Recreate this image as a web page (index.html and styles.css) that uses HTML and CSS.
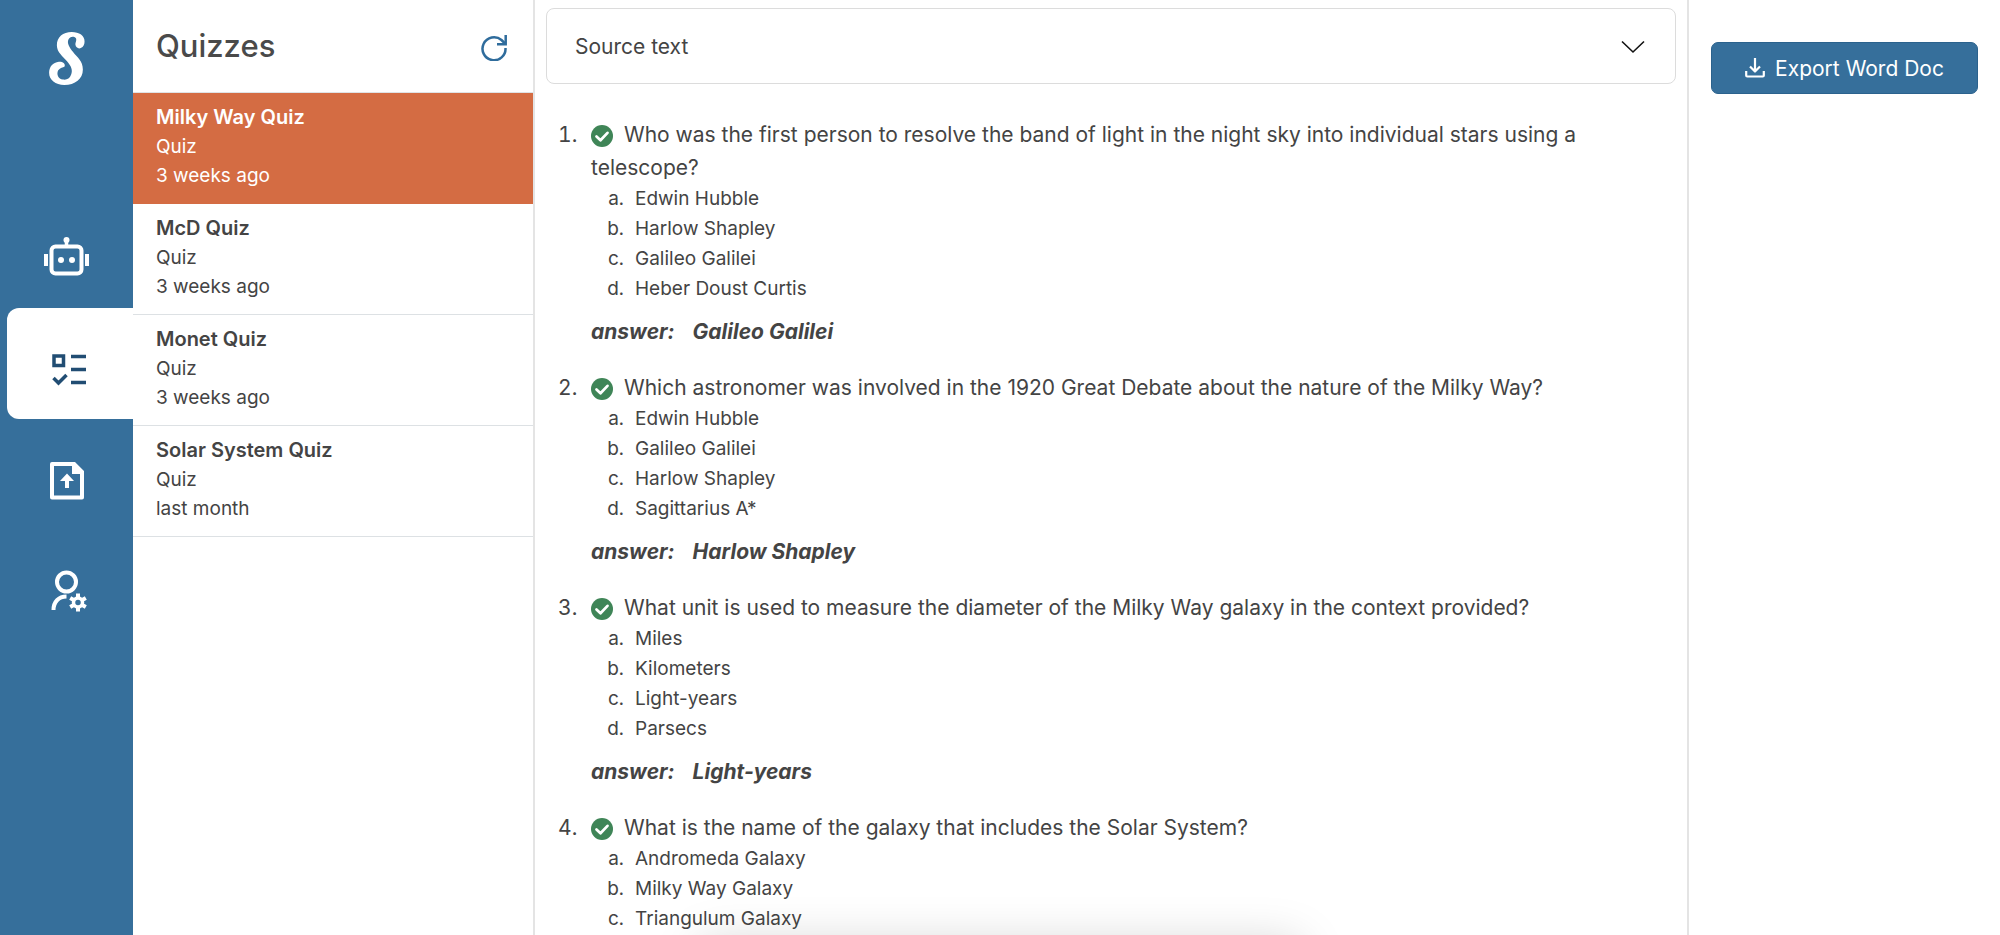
FILE: index.html
```html
<!DOCTYPE html>
<html lang="en">
<head>
<meta charset="utf-8">
<meta name="viewport" content="width=device-width, initial-scale=1">
<title>Quizzes</title>
<link rel="stylesheet" href="styles.css">
</head>
<body>
<svg class="sprite" aria-hidden="true">
  <symbol id="check" viewBox="0 0 16 16"><circle cx="8" cy="8" r="8" fill="#3f8557"/><path d="M4 8.400l2.900 2.700 5.100-5.400" fill="none" stroke="#fff" stroke-width="2" stroke-linecap="round" stroke-linejoin="round"/></symbol>
</svg>
<div class="app">
  <aside class="rail">
    <a class="logo" href="#" aria-label="Home">
      <svg viewBox="57 37 106 157"><path fill="#fff" d="M162 66C163 48 146 37 124 37C98 37 80 52 80 76C80 98 98 108 110 124C122 138 128 150 122 164C118 176 108 180 98 178C84 176 78 162 84 150C90 142 98 142 103 139C106 130 96 124 86 125C68 127 57 140 57 158C57 180 76 194 102 194C134 194 157 176 157 148C157 122 140 112 128 96C116 82 110 70 114 60C118 50 130 48 136 55C140 62 134 68 135 75C136 84 145 88 152 84C158 82 162 74 162 66Z"/></svg>
    </a>
    <nav class="rail-nav" aria-label="Sections">
      <a class="tab" href="#" aria-label="Assistant">
        <svg viewBox="0 0 48 48" fill="none" stroke="currentColor"><rect x="9.500" y="12.500" width="30" height="27" rx="4" stroke-width="4"/><path d="M24.500 12V7" stroke-width="3.500"/><circle cx="24.500" cy="6" r="3" fill="currentColor" stroke="none"/><circle cx="19" cy="26" r="3" fill="currentColor" stroke="none"/><circle cx="30" cy="26" r="3" fill="currentColor" stroke="none"/><path d="M4 20v12M45 20v12" stroke-width="4"/></svg>
      </a>
      <a class="tab tab-active" href="#" aria-label="Quizzes" aria-current="page">
        <svg viewBox="0 0 48 48" fill="none" stroke="currentColor" stroke-width="3.500"><rect x="9" y="11" width="9.500" height="9.500"/><path d="M26 11.500h15M26 24.500h15M26 37.500h15M8.500 33l5 5 8-8"/></svg>
      </a>
      <a class="tab" href="#" aria-label="Upload">
        <svg viewBox="0 0 48 48"><path fill="currentColor" fill-rule="evenodd" d="M10 6H33l9 9v26.500a2 2 0 0 1-2 2H10a2 2 0 0 1-2-2V8a2 2 0 0 1 2-2zM12 10v29.500H38V18h-8V10zM25 17.500l7 7.500h-5v7h-4v-7h-5z"/></svg>
      </a>
      <a class="tab" href="#" aria-label="Account settings">
        <svg viewBox="0 0 48 48" fill="none" stroke="currentColor"><circle cx="24.500" cy="15" r="9.500" stroke-width="4"/><path d="M11.500 43c0-8 5-13.500 13-13.500" stroke-width="4"/><circle cx="36" cy="35.500" r="4.500" stroke-width="3.500"/><path d="M36 30.500v-4M36 40.500v4M40.300 33l3.500-2M31.700 38l-3.500 2M31.700 33l-3.500-2M40.300 38l3.500 2" stroke-width="4"/></svg>
      </a>
    </nav>
  </aside>

  <section class="list-panel">
    <header class="list-header">
      <h1>Quizzes</h1>
      <button class="refresh" type="button" aria-label="Refresh">
        <svg viewBox="0 0 26 26" fill="none" stroke="currentColor" stroke-width="2.500"><path d="M24.500 13A11.500 11.500 0 1 1 20.500 5l4 4"/><path d="M24.700 0v9.300H16"/></svg>
      </button>
    </header>
    <ul class="quiz-list">
      <li><a class="quiz quiz-active" href="#"><strong>Milky Way Quiz</strong><span>Quiz</span><span>3 weeks ago</span></a></li>
      <li><a class="quiz" href="#"><strong>McD Quiz</strong><span>Quiz</span><span>3 weeks ago</span></a></li>
      <li><a class="quiz" href="#"><strong>Monet Quiz</strong><span>Quiz</span><span>3 weeks ago</span></a></li>
      <li><a class="quiz" href="#"><strong>Solar System Quiz</strong><span>Quiz</span><span>last month</span></a></li>
    </ul>
  </section>

  <main class="content">
    <button class="source" type="button" aria-expanded="false">
      <span>Source text</span>
      <svg viewBox="0 0 24 14" fill="none" stroke="#111" stroke-width="1.600"><path d="M1 1.500l11 10.500 11-10.500"/></svg>
    </button>
    <ol class="questions">
      <li>
        <svg class="check"><use href="#check"/></svg>Who was the first person to resolve the band of light in the night sky into individual stars using a telescope?
        <ol class="options"><li>Edwin Hubble</li><li>Harlow Shapley</li><li>Galileo Galilei</li><li>Heber Doust Curtis</li></ol>
        <p class="answer"><span>answer:</span><span>Galileo Galilei</span></p>
      </li>
      <li>
        <svg class="check"><use href="#check"/></svg>Which astronomer was involved in the 1920 Great Debate about the nature of the Milky Way?
        <ol class="options"><li>Edwin Hubble</li><li>Galileo Galilei</li><li>Harlow Shapley</li><li>Sagittarius A*</li></ol>
        <p class="answer"><span>answer:</span><span>Harlow Shapley</span></p>
      </li>
      <li>
        <svg class="check"><use href="#check"/></svg>What unit is used to measure the diameter of the Milky Way galaxy in the context provided?
        <ol class="options"><li>Miles</li><li>Kilometers</li><li>Light-years</li><li>Parsecs</li></ol>
        <p class="answer"><span>answer:</span><span>Light-years</span></p>
      </li>
      <li>
        <svg class="check"><use href="#check"/></svg>What is the name of the galaxy that includes the Solar System?
        <ol class="options"><li>Andromeda Galaxy</li><li>Milky Way Galaxy</li><li>Triangulum Galaxy</li></ol>
      </li>
    </ol>
  </main>

  <aside class="actions">
    <button class="export" type="button">
      <svg viewBox="0 0 20 20" fill="none" stroke="currentColor" stroke-width="2.200" stroke-linejoin="round"><path d="M1.200 13v4.500a1 1 0 0 0 1 1h15.600a1 1 0 0 0 1-1V13M10 0v13M5 8.500l5 5 5-5"/></svg>
      <span>Export Word Doc</span>
    </button>
  </aside>
  <div class="bottom-shade" aria-hidden="true"></div>
</div>
</body>
</html>
```
FILE: styles.css
```css
* { box-sizing: border-box; }
body {
  margin: 0;
  font-family: Inter, "Liberation Sans", sans-serif;
  font-size: 21px;
  line-height: 33px;
  color: #444;
  background: #fff;
}
button { font: inherit; color: inherit; cursor: pointer; }
a { color: inherit; text-decoration: none; }
h1, ul, ol, p { margin: 0; padding: 0; }
.sprite { display: none; }
.app {
  position: relative;
  display: flex;
  height: 100vh;
  overflow: hidden;
}
.rail {
  flex: 0 0 133px;
  display: flex;
  flex-direction: column;
  background: #366f9b;
}
.logo {
  display: flex;
  justify-content: center;
  height: 197px;
  padding-top: 32px;
}
.logo svg { width: 36px; height: 53px; }
.rail-nav { display: flex; flex-direction: column; }
.tab {
  display: flex;
  align-items: center;
  justify-content: center;
  height: 111px;
  padding: 10px 2px 0 0;
  color: #fff;
}
.tab svg { width: 48px; height: 48px; }
.tab-active {
  margin-left: 7px;
  border-radius: 12px 0 0 12px;
  background: #fff;
  color: #214d73;
}
.list-panel {
  flex: 0 0 402px;
  border-right: 2px solid #e4e4e4;
}
.list-header {
  display: flex;
  align-items: center;
  justify-content: space-between;
  height: 93px;
  padding: 0 26px 0 23px;
  border-bottom: 1px solid #dfe3e6;
}
h1 { font-size: 31px; font-weight: 500; line-height: 40px; color: #4a4a4a; }
.refresh { display: flex; padding: 4px 0 0; border: 0; background: none; color: #2f6c9c; }
.refresh svg { width: 26px; height: 26px; }
.quiz-list { list-style: none; }
.quiz {
  display: flex;
  flex-direction: column;
  padding: 10px 23px 13px;
  border-bottom: 1px solid #dde1e4;
  font-size: 19px;
  line-height: 29px;
}
.quiz strong { font-size: 20px; font-weight: 600; }
.quiz-active { background: #d46c43; border-color: #d46c43; color: #fff; }
.content {
  flex: 1;
  min-width: 0;
  padding: 8px 11px 0;
}
.source {
  display: flex;
  align-items: center;
  justify-content: space-between;
  width: 100%;
  padding: 21px 30px 20px 28px;
  border: 1px solid #dcdcdc;
  border-radius: 8px;
  background: #fff;
}
.source svg { width: 24px; height: 14px; }
.questions { padding: 34px 60px 0 37px; }
.questions > li { padding-left: 8px; margin-bottom: 23px; }
.check { width: 22px; height: 22px; margin-right: 11px; vertical-align: -5px; }
.options {
  padding-left: 38px;
  list-style: lower-alpha;
  font-size: 19px;
  line-height: 30px;
}
.options li { padding-left: 6px; }
.answer {
  display: flex;
  gap: 18px;
  margin-top: 11px;
  font-style: italic;
  font-weight: 700;
}
.actions {
  flex: 0 0 313px;
  padding: 42px 22px 0;
  border-left: 2px solid #e4e4e4;
}
.export {
  display: flex;
  align-items: center;
  justify-content: center;
  gap: 10px;
  width: 100%;
  height: 52px;
  border: 1px solid #2b628d;
  border-radius: 7px;
  background: #366f9b;
  color: #fff;
}
.export svg { width: 20px; height: 20px; }
.bottom-shade {
  position: absolute;
  top: 100%;
  left: 35%;
  width: 30%;
  height: 60px;
  box-shadow: 0 8px 48px rgba(0, 0, 0, .175);
}
```
